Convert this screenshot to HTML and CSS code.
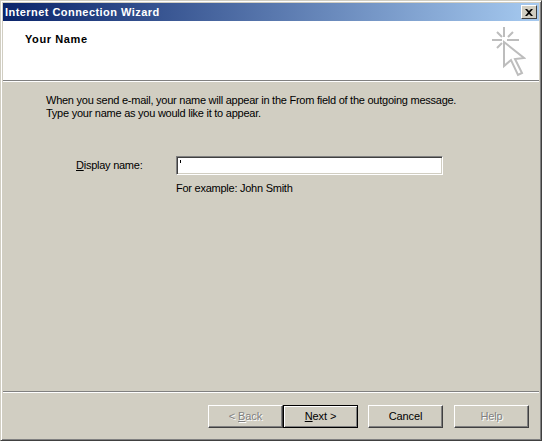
FILE: index.html
```html
<!DOCTYPE html>
<html lang="en">
<head>
    <meta charset="UTF-8">
    <title>Internet Connection Wizard</title>
    <link rel="stylesheet" href="styles.css">
</head>
<body>
    <div class="wizard">
        <div class="titlebar">
            <span class="title">Internet Connection Wizard</span>
            <span class="close">
                <svg width="8" height="7" viewBox="0 0 8 7"><path d="M0 0h2l2 2 2-2h2L5 3.500 8 7H6L4 5 2 7H0l3-3.500z" fill="#000"/></svg>
            </span>
        </div>
        <header class="head">
            <h1>Your Name</h1>
            <svg class="spark" width="36" height="54" viewBox="0 0 36 54">
                <path d="M14 3v10M2 16h10M17 16h12M7 8l5 5M23 8l-5 5M7 24l5-5" fill="none" stroke="#bdbdbd" stroke-width="2"/>
                <path d="M14 18v24l7-6 7 15 4-2-7-14 9-1z" fill="#fff" stroke="#bdbdbd" stroke-width="2"/>
            </svg>
        </header>
        <main class="content">
            <p class="intro">When you send e-mail, your name will appear in the From field of the outgoing message.<br>Type your name as you would like it to appear.</p>
            <div class="field">
                <label class="field-label" for="name"><u>D</u>isplay name:</label>
                <div class="field-main">
                    <div class="textbox" id="name"><span class="caret"></span></div>
                    <p class="hint">For example: John Smith</p>
                </div>
            </div>
        </main>
        <footer class="foot">
            <div class="btn-pair">
                <button class="btn" disabled>&lt; <u>B</u>ack</button>
                <button class="btn btn-default"><u>N</u>ext &gt;</button>
            </div>
            <button class="btn">Cancel</button>
            <button class="btn" disabled>Help</button>
        </footer>
    </div>
</body>
</html>
```

FILE: styles.css
```css
html, body {
    margin: 0;
    padding: 0;
    height: 100%;
    overflow: hidden;
}
body {
    font-family: "Liberation Sans", Arial, sans-serif;
    font-size: 11px;
    letter-spacing: -0.25px;
    color: #000;
    background: #d1cec2;
}
.wizard {
    box-sizing: border-box;
    width: 542px;
    height: 441px;
    display: flex;
    flex-direction: column;
    padding: 2px;
    background: #d1cec2;
    border: 1px solid;
    border-color: #d1cec2 #404040 #404040 #d1cec2;
    box-shadow: inset 1px 1px 0 #fff, inset -1px -1px 0 #808080;
}
.titlebar {
    height: 18px;
    flex: none;
    display: flex;
    align-items: center;
    justify-content: space-between;
    padding: 0 2px;
    color: #fff;
    background: linear-gradient(to right, #0a246a, #a6caf0);
}
.title {
    font-weight: bold;
    letter-spacing: 0.45px;
}
.close {
    box-sizing: border-box;
    width: 16px;
    height: 14px;
    display: flex;
    align-items: center;
    justify-content: center;
    background: #d1cec2;
    border: 1px solid;
    border-color: #fff #404040 #404040 #fff;
}
.head {
    height: 59px;
    flex: none;
    display: flex;
    justify-content: space-between;
    padding: 0 13px 0 22px;
    background: #fff;
    border-bottom: 1px solid #808080;
    box-shadow: 0 1px 0 #fff;
}
.head h1 {
    margin: 12px 0 0;
    font-size: 11px;
    font-weight: bold;
    letter-spacing: 0.6px;
}
.spark {
    margin-top: 3px;
}
.content {
    flex: 1;
    padding: 11px 0 0 43px;
}
.intro {
    margin: 2px 0 0;
    line-height: 13px;
}
.field {
    display: flex;
    margin-top: 36px;
}
.field-label {
    width: 100px;
    margin-left: 30px;
    padding-top: 3px;
}
.field-main {
    width: 267px;
}
.textbox {
    box-sizing: border-box;
    height: 19px;
    padding: 2px;
    background: #fff;
    border: 1px solid;
    border-color: #808080 #fff #fff #808080;
    box-shadow: inset 1px 1px 0 #404040, inset -1px -1px 0 #d1cec2;
}
.caret {
    display: block;
    width: 1px;
    height: 3px;
    margin: 1px 0 0 1px;
    background: #000;
}
.hint {
    margin: 7px 0 0;
}
.foot {
    flex: none;
    height: 47px;
    display: flex;
    justify-content: flex-end;
    gap: 11px;
    padding: 13px 10px 0 0;
    border-top: 1px solid #808080;
    box-shadow: inset 0 1px 0 #fff;
    box-sizing: border-box;
}
.btn-pair {
    display: flex;
    margin-right: -1px;
}
.btn {
    box-sizing: border-box;
    width: 75px;
    height: 23px;
    padding: 0 0 2px;
    font: inherit;
    letter-spacing: -0.1px;
    color: #000;
    background: #d1cec2;
    border: 1px solid;
    border-color: #fff #404040 #404040 #fff;
    box-shadow: inset -1px -1px 0 #808080;
}
.btn:disabled {
    color: #808080;
    text-shadow: 1px 1px 0 #fff;
}
.btn-default {
    border-color: #000;
    box-shadow: inset 1px 1px 0 #fff, inset -1px -1px 0 #808080;
}
```
